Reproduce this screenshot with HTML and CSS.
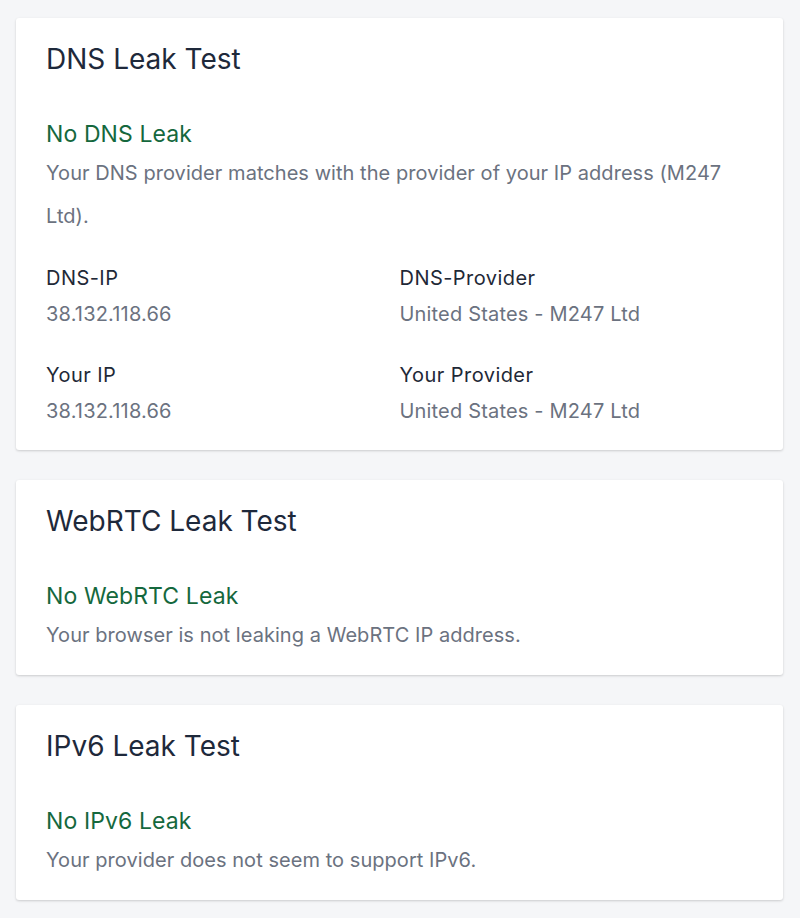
FILE: index.html
```html
<!DOCTYPE html>
<html lang="en">
<head>
<meta charset="utf-8">
<title>Leak Tests</title>
<link rel="stylesheet" href="styles.css">
</head>
<body>
<main class="page">
  <section class="card">
    <h2 class="card-title">DNS Leak Test</h2>
    <h3 class="status">No DNS Leak</h3>
    <p class="desc">Your DNS provider matches with the provider of your IP address (M247 Ltd).</p>
    <div class="info-grid">
      <div class="info">
        <div class="info-label">DNS-IP</div>
        <div class="info-value">38.132.118.66</div>
      </div>
      <div class="info">
        <div class="info-label">DNS-Provider</div>
        <div class="info-value">United States - M247 Ltd</div>
      </div>
      <div class="info">
        <div class="info-label">Your IP</div>
        <div class="info-value">38.132.118.66</div>
      </div>
      <div class="info">
        <div class="info-label">Your Provider</div>
        <div class="info-value">United States - M247 Ltd</div>
      </div>
    </div>
  </section>
  <section class="card">
    <h2 class="card-title">WebRTC Leak Test</h2>
    <h3 class="status">No WebRTC Leak</h3>
    <p class="desc">Your browser is not leaking a WebRTC IP address.</p>
  </section>
  <section class="card">
    <h2 class="card-title">IPv6 Leak Test</h2>
    <h3 class="status">No IPv6 Leak</h3>
    <p class="desc">Your provider does not seem to support IPv6.</p>
  </section>
</main>
</body>
</html>
```
FILE: styles.css
```css
* { box-sizing: border-box; }
html, body { margin: 0; padding: 0; }
body {
  background: #f5f6f8;
  font-family: Inter, "Noto Sans", "Liberation Sans", sans-serif;
  color: #1f2937;
}
.page {
  display: flex;
  flex-direction: column;
  gap: 30px;
  padding: 18px 17px 18px 16px;
}
.card {
  background: #ffffff;
  border-radius: 3px;
  box-shadow: 0 1px 3px rgba(0,0,0,0.12), 0 1px 2px rgba(0,0,0,0.06);
  padding: 23px 30px 18px;
}
.card-title {
  margin: 0;
  font-size: 28px;
  font-weight: 400;
  line-height: 36px;
  color: #1e293b;
}
.status {
  margin: 42px 0 0;
  font-size: 23px;
  font-weight: 400;
  line-height: 30px;
  letter-spacing: 0.1px;
  color: #15683d;
}
.desc {
  margin: 3px 0 0;
  font-size: 20px;
  line-height: 43px;
  letter-spacing: 0.05px;
  color: #6b7280;
}
.info-grid {
  display: grid;
  grid-template-columns: 1fr 1fr;
  row-gap: 33px;
  margin: 26px 0 7px;
}
.info-label {
  font-size: 20px;
  line-height: 28px;
  letter-spacing: 0.45px;
  color: #1f2937;
}
.info-value {
  margin-top: 8px;
  font-size: 20px;
  line-height: 28px;
  letter-spacing: 0.18px;
  color: #6b7280;
}
```
